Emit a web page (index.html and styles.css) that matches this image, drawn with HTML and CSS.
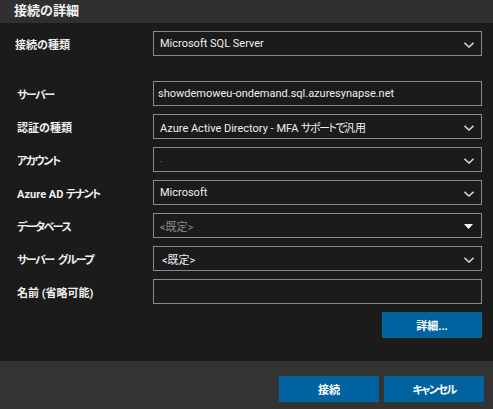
FILE: index.html
```html
<!DOCTYPE html>
<html lang="ja">
<head>
<meta charset="utf-8">
<link rel="stylesheet" href="styles.css">
</head>
<body>
<div class="dialog">
  <div class="header">接続の詳細</div>
  <div class="main">
    <div class="row">
      <div class="label first">接続の種類</div>
      <div class="field"><span class="val">Microsoft SQL Server</span><svg class="chev" width="10" height="6" viewBox="0 0 10 6"><polyline points="0.5,0.8 5,5 9.5,0.8" fill="none" stroke="#d0d0d0" stroke-width="1.6"/></svg></div>
    </div>
    <div class="row spaced">
      <div class="label"><span class="kana">サーバー</span></div>
      <div class="field input"><span class="val tight">showdemoweu-ondemand.sql.azuresynapse.net</span></div>
    </div>
    <div class="row">
      <div class="label">認証の種類</div>
      <div class="field"><span class="val">Azure Active Directory - MFA <span class="kana">サポートで</span>汎用</span><svg class="chev" width="10" height="6" viewBox="0 0 10 6"><polyline points="0.5,0.8 5,5 9.5,0.8" fill="none" stroke="#d0d0d0" stroke-width="1.6"/></svg></div>
    </div>
    <div class="row">
      <div class="label"><span class="kana">アカウント</span></div>
      <div class="field"><span class="val dot">.</span><svg class="chev" width="10" height="6" viewBox="0 0 10 6"><polyline points="0.5,0.8 5,5 9.5,0.8" fill="none" stroke="#d0d0d0" stroke-width="1.6"/></svg></div>
    </div>
    <div class="row">
      <div class="label">Azure AD <span class="kana">テナント</span></div>
      <div class="field"><span class="val">Microsoft</span><svg class="chev" width="10" height="6" viewBox="0 0 10 6"><polyline points="0.5,0.8 5,5 9.5,0.8" fill="none" stroke="#d0d0d0" stroke-width="1.6"/></svg></div>
    </div>
    <div class="row">
      <div class="label"><span class="kana">データベース</span></div>
      <div class="field"><span class="val muted">&lt;既定&gt;</span><svg class="tri" width="9" height="5" viewBox="0 0 9 5"><polygon points="0,0 9,0 4.5,5" fill="#ffffff"/></svg></div>
    </div>
    <div class="row">
      <div class="label"><span class="kana">サーバー グループ</span></div>
      <div class="field"><span class="val indent">&lt;既定&gt;</span><svg class="chev" width="10" height="6" viewBox="0 0 10 6"><polyline points="0.5,0.8 5,5 9.5,0.8" fill="none" stroke="#d0d0d0" stroke-width="1.6"/></svg></div>
    </div>
    <div class="row">
      <div class="label">名前 (省略可能)</div>
      <div class="field input"></div>
    </div>
    <div class="actions">
      <button class="btn">詳細...</button>
    </div>
  </div>
  <div class="footer">
    <button class="btn">接続</button>
    <button class="btn"><span class="kana">キャンセル</span></button>
  </div>
</div>
</body>
</html>
```

FILE: styles.css
```css
html, body {
  margin: 0;
  padding: 0;
  background: #1b1b1b;
}
.dialog {
  width: 493px;
  height: 409px;
  display: flex;
  flex-direction: column;
  font-family: Roboto, "Noto Sans CJK JP", sans-serif;
  color: #ffffff;
  font-size: 11px;
}
.header {
  height: 23px;
  background: #303030;
  box-sizing: border-box;
  padding-left: 14px;
  font-size: 13px;
  font-weight: bold;
  line-height: 22px;
  color: #f2f2f2;
}
.main {
  flex: 1;
  background: #1b1b1b;
  padding-top: 8px;
  display: flex;
  flex-direction: column;
  gap: 8px;
}
.row {
  display: flex;
  align-items: center;
  height: 25px;
}
.row.spaced {
  margin-top: 17px;
}
.label {
  width: 153px;
  box-sizing: border-box;
  padding-left: 17px;
  font-weight: bold;
  font-size: 11px;
  color: #f0f0f0;
  white-space: nowrap;
}
.label.first {
  padding-left: 15px;
}
.kana {
  font-feature-settings: "palt" 1;
  letter-spacing: -1.5px;
  word-spacing: 3px;
}
.field {
  width: 329px;
  height: 25px;
  box-sizing: border-box;
  border: 1px solid #8a8a8a;
  display: flex;
  align-items: center;
  justify-content: space-between;
  padding: 0 7px 0 6px;
}
.val {
  white-space: nowrap;
  color: #f0f0f0;
  font-size: 11px;
}
.val.tight {
  margin-left: -2px;
}
.val.indent {
  margin-left: 2px;
}
.val.muted {
  color: #8c8c8c;
}
.val.dot {
  color: #999;
  font-size: 9px;
  margin-top: -2px;
}
.chev {
  display: block;
  margin-top: 2px;
}
.tri {
  display: block;
  margin-right: 1px;
  margin-top: 1px;
}
.actions {
  display: flex;
  justify-content: flex-end;
  padding-right: 11px;
}
.btn {
  width: 100px;
  height: 26px;
  border: none;
  background: #00639f;
  color: #ffffff;
  font-family: Roboto, "Noto Sans CJK JP", sans-serif;
  font-size: 11px;
  font-weight: bold;
  padding: 0;
}
.footer {
  height: 48px;
  background: #333333;
  box-sizing: border-box;
  padding: 15px 9px 0 0;
  display: flex;
  justify-content: flex-end;
  gap: 5px;
}
```
